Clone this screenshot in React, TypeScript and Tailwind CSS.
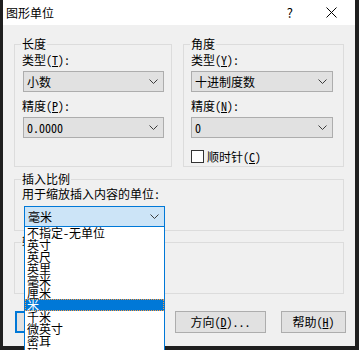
import React from "react";

const Chevron = () => (
  <svg width="9" height="5" viewBox="0 0 9 5" className="shrink-0">
    <polyline points="0.5,0.5 4.5,4.5 8.5,0.5" fill="none" stroke="#3c3c3c" strokeWidth="1" />
  </svg>
);

const Legend = ({ text, className = "" }: { text: string; className?: string }) => (
  <div className={"-mt-[7px] h-[12px] leading-[12px] " + className}>
    <span className="bg-[#f0f0f0] px-[1px]">{text}</span>
  </div>
);

const Combo = ({ value, w, active = false }: { value: string; w: string; active?: boolean }) => (
  <div
    className={
      "h-[21px] flex items-center pl-[3px] pr-[5px] border " +
      w +
      (active ? " bg-[#cce4f7] border-[#0078d7]" : " bg-[#e1e1e1] border-[#adadad]")
    }
  >
    <span className="flex-1 leading-[12px]">{value}</span>
    <Chevron />
  </div>
);

const Lbl = ({ a, k, b }: { a: string; k: string; b: string }) => (
  <div className="h-[12px] leading-[12px]">
    {a}
    <span className="underline underline-offset-[1px]">{k}</span>
    {b}
  </div>
);

const items = ["不指定-无单位", "英寸", "英尺", "英里", "毫米", "厘米", "米", "千米", "微英寸", "密耳", "码"];

export default function App() {
  return (
    <div className="relative w-[359px] h-[350px] overflow-hidden bg-[#1f1f1f] pl-[3px] pr-[4px] pb-[4px] flex flex-col text-[12px] text-black font-['Noto_Sans_Mono_CJK_SC','Noto_Sans_CJK_SC',sans-serif]">
      <div className="h-[25px] shrink-0 bg-white flex items-center font-['Noto_Sans_CJK_SC',sans-serif]">
        <span className="ml-[3px] leading-[14px] text-[12px]">图形单位</span>
        <span className="ml-auto mr-[33px] text-[13px] leading-[14px]">?</span>
        <svg width="11" height="11" viewBox="0 0 11 11" className="mr-[18px]">
          <line x1="0.5" y1="0.5" x2="10.5" y2="10.5" stroke="#000" strokeWidth="1" />
          <line x1="10.5" y1="0.5" x2="0.5" y2="10.5" stroke="#000" strokeWidth="1" />
        </svg>
      </div>
      <div className="flex-1 bg-[#f0f0f0] pl-[11px] pt-[19px]">
        <div className="flex">
          <div className="w-[158px] h-[123px] border border-[#dcdcdc] pl-[7px]">
            <Legend text="长度" className="-ml-[1px]" />
            <div className="mt-[4px]">
              <Lbl a="类型(" k="T" b="):" />
            </div>
            <div className="mt-[5px] ml-[1px]">
              <Combo value="小数" w="w-[141px]" />
            </div>
            <div className="mt-[8px]">
              <Lbl a="精度(" k="P" b="):" />
            </div>
            <div className="mt-[5px] ml-[1px]">
              <Combo value="0.0000" w="w-[141px]" />
            </div>
          </div>
          <div className="ml-[11px] w-[161px] h-[123px] border border-[#dcdcdc] pl-[7px]">
            <Legend text="角度" className="-ml-[1px]" />
            <div className="mt-[4px]">
              <Lbl a="类型(" k="Y" b="):" />
            </div>
            <div className="mt-[5px]">
              <Combo value="十进制度数" w="w-[142px]" />
            </div>
            <div className="mt-[8px]">
              <Lbl a="精度(" k="N" b="):" />
            </div>
            <div className="mt-[5px]">
              <Combo value="0" w="w-[142px]" />
            </div>
            <div className="mt-[12px] flex items-center">
              <div className="w-[13px] h-[13px] border border-[#333333] bg-white" />
              <div className="ml-[3px] leading-[12px]">
                顺时针(<span className="underline underline-offset-[1px]">C</span>)
              </div>
            </div>
          </div>
        </div>
        <div className="mt-[12px] w-[330px] h-[52px] border border-[#dcdcdc] pl-[9px]">
          <Legend text="插入比例" className="-ml-[3px]" />
          <div className="mt-[3px] -ml-[2px] h-[12px] leading-[12px]">用于缩放插入内容的单位:</div>
          <div className="mt-[6px]">
            <Combo value="毫米" w="w-[141px]" active />
          </div>
        </div>
        <div className="mt-[11px] w-[330px] h-[52px] border border-[#dcdcdc] pl-[9px]">
          <Legend text="输出样例" className="-ml-[3px]" />
        </div>
        <div className="mt-[17px] flex">
          <div className="ml-[1px] w-[76px] h-[22px] border-2 border-[#0078d7] bg-[#e1e1e1] flex items-center justify-center">确定</div>
          <div className="ml-[8px] w-[66px] h-[22px] border border-[#adadad] bg-[#e1e1e1] flex items-center justify-center">取消</div>
          <div className="ml-[10px] w-[91px] h-[22px] border border-[#adadad] bg-[#e1e1e1] flex items-center justify-center leading-[12px]">
            方向(<span className="underline underline-offset-[1px]">D</span>)...
          </div>
          <div className="ml-[15px] w-[65px] h-[22px] border border-[#adadad] bg-[#e1e1e1] flex items-center justify-center leading-[12px]">
            帮助(<span className="underline underline-offset-[1px]">H</span>)
          </div>
        </div>
      </div>
      <div className="absolute left-[24px] top-[227px] w-[141px] h-[140px] bg-white border-x border-[#0078d7]">
        {items.map((t, i) =>
          i === 6 ? (
            <div
              key={t}
              className="h-[12px] leading-[10px] pl-[1px] bg-[#0078d7] text-white border border-dotted border-[#ff9a3c]"
            >
              {t}
            </div>
          ) : (
            <div key={t} className="h-[12px] leading-[12px] pl-[2px] whitespace-nowrap">
              {t}
            </div>
          )
        )}
      </div>
    </div>
  );
}
